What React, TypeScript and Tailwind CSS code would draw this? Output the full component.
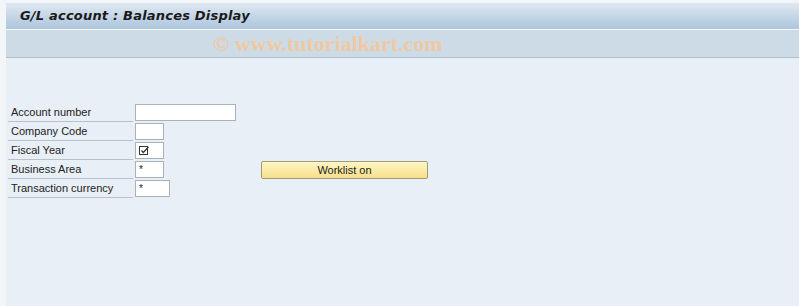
import React from 'react';

const fields = [
  { label: 'Account number', width: 'w-[101px]', value: '' },
  { label: 'Company Code', width: 'w-[29px]', value: '' },
  { label: 'Fiscal Year', width: 'w-[29px]', value: 'check' },
  { label: 'Business Area', width: 'w-[29px]', value: '*' },
  { label: 'Transaction currency', width: 'w-[35px]', value: '*' },
];

const CheckGlyph = () => (
  <svg width="10" height="10" viewBox="0 0 10 10" className="block">
    <rect x="0.5" y="0.5" width="8" height="8" fill="none" stroke="#333" strokeWidth="1" />
    <path d="M2.5 4.5 L4.3 6.5 L9.5 1" fill="none" stroke="#333" strokeWidth="1.2" />
  </svg>
);

export default function App() {
  return (
    <div
      className="w-[799px] h-[306px] bg-[#f3f6f9] pt-[3px] pl-[6px] overflow-hidden"
      style={{ fontFamily: '"Liberation Sans", Arial, sans-serif' }}
    >
      <div className="h-full flex flex-col bg-[#e9eff7]">
        {/* Title */}
        <div className="h-[27px] bg-gradient-to-b from-[#dfe8f1] to-[#adc5dd] flex items-center pl-[14px] border-b border-[#f4f8fb]">
          <span className="text-[13px] font-bold italic text-[#1a1a1a] tracking-[0.2px]" style={{ fontFamily: '"DejaVu Sans", Verdana, sans-serif' }}>
            G/L account : Balances Display
          </span>
        </div>
        {/* Toolbar with watermark */}
        <div className="h-[28px] bg-[#cddbe7] border-b border-[#b3c0cc] flex items-center pl-[207px]">
          <span
            className="text-[22px] font-bold text-[#efc9a2] leading-none"
            style={{ fontFamily: '"Liberation Serif", "Times New Roman", serif' }}
          >
            © www.tutorialkart.com
          </span>
        </div>

        {/* Form */}
        <div className="pt-[46px] pl-[2px] flex">
          <div className="flex flex-col">
            {fields.map((f) => (
              <div key={f.label} className="h-[19px] flex items-start">
                <div className="w-[125px] h-[18px] border-b border-[#b9c1c9] flex items-center pl-[3px] text-[11px] text-[#222]">
                  {f.label}
                </div>
                <div
                  className={`${f.width} h-[17px] ml-[2px] bg-white border border-[#a9b1b9] flex items-center pl-[3px] text-[10px] text-[#222]`}
                >
                  {f.value === 'check' ? <CheckGlyph /> : f.value}
                </div>
              </div>
            ))}
          </div>
          <div className="pt-[57px] pl-[25px]">
            <button className="w-[167px] h-[18px] rounded-[2px] border border-[#a39a74] bg-gradient-to-b from-[#fff6c4] to-[#f6e08a] text-[11px] text-[#222] flex items-center justify-center">
              Worklist on
            </button>
          </div>
        </div>
      </div>
    </div>
  );
}
